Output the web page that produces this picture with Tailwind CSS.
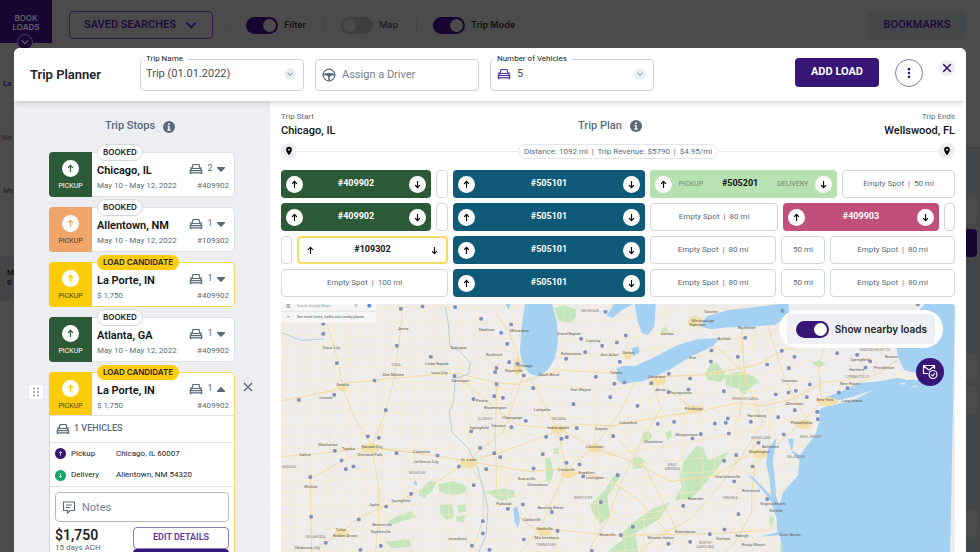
<!DOCTYPE html>
<html lang="en">
<head>
  <meta charset="UTF-8" />
  <meta name="viewport" content="width=device-width, initial-scale=1.0" />
  <title>Trip Planner</title>
  <script src="https://cdn.jsdelivr.net/npm/@tailwindcss/browser@4"></script>
</head>
<body class="relative flex h-screen flex-col overflow-hidden bg-[#4b4b4b] font-['Roboto','Liberation_Sans',sans-serif]">

  <!-- Icons -->
  <svg class="hidden" xmlns="http://www.w3.org/2000/svg">
    <symbol id="up" viewBox="0 0 16 16"><path d="M8 13V4M4.500 7 8 3.500 11.500 7" fill="none" stroke="currentColor" stroke-width="1.700"/></symbol>
    <symbol id="down" viewBox="0 0 16 16"><path d="M8 3v9M4.500 9 8 12.500 11.500 9" fill="none" stroke="currentColor" stroke-width="1.700"/></symbol>
    <symbol id="chevron" viewBox="0 0 12 12"><path d="M2 4l4 4 4-4" fill="none" stroke="currentColor" stroke-width="1.500"/></symbol>
    <symbol id="close" viewBox="0 0 12 12"><path d="M2 2l8 8M10 2l-8 8" fill="none" stroke="currentColor" stroke-width="1.300"/></symbol>
    <symbol id="car" viewBox="0 0 14 12"><path d="M1.300 9.800V7.200L3 5.500h8l1.700 1.700v2.600zM3 5.500l1-4h6l1 4M1.800 9.800v1.500M12.200 9.800v1.500M.8 5h2M11.200 5h2M1.500 7.700h11" fill="none" stroke="currentColor" stroke-width="1.200"/></symbol>
    <symbol id="caret" viewBox="0 0 8 5"><path d="M0 0h8v1L4.700 4.600a1 1 0 0 1-1.400 0L0 1z" fill="currentColor"/></symbol>
    <symbol id="info" viewBox="0 0 12 12"><circle cx="6" cy="6" r="6" fill="currentColor"/><path d="M6 5.200V9M4.700 5.500H6M4.500 9h3" stroke="#fff" stroke-width="1.400" fill="none"/><circle cx="6" cy="3.200" r=".9" fill="#fff"/></symbol>
    <symbol id="pin" viewBox="0 0 12 12"><path d="M6 1a3.400 3.400 0 0 0-3.400 3.400C2.600 7 6 11 6 11s3.400-4 3.400-6.600A3.400 3.400 0 0 0 6 1z" fill="currentColor"/><circle cx="6" cy="4.400" r="1.100" fill="#fff"/></symbol>
    <symbol id="wheel" viewBox="0 0 14 14"><circle cx="7" cy="7" r="5.900" fill="none" stroke="currentColor" stroke-width="1.200"/><path d="M1.500 6c3-1.300 8-1.300 11 0v1.500H9L7.800 9v3.500H6.200V9L5 7.500H1.500z" fill="currentColor"/></symbol>
  </svg>

  <!-- Page behind the dialog -->
  <header class="flex h-[49px] shrink-0 items-start text-[#1c0b40]">
    <button class="relative h-[43px] w-[52px] bg-[#170632] pt-[3px] font-['Inter'] text-[8px] leading-[9px] font-semibold text-[#65616d]">
      BOOK<br />LOADS
      <span class="absolute top-[34px] left-[17px] flex size-4 items-center justify-center rounded-full border border-[#4a3b6a] bg-[#170632]"><svg class="size-2.5"><use href="#chevron" /></svg></span>
    </button>
    <div class="flex grow items-center pt-[11px] pr-3.5 pl-[17px]">
      <button class="flex h-7 w-36 items-center justify-center gap-2 rounded border border-[#2c1d4e] text-[11px] font-semibold">
        SAVED SEARCHES
        <svg class="size-3.5"><use href="#chevron" /></svg>
      </button>
      <div class="ml-4 flex h-4 items-center border-l border-[#444] pl-4">
        <input type="checkbox" id="filter" checked class="h-[17px] w-8 appearance-none rounded-full bg-[#170632] p-0.5 before:block before:size-[13px] before:rounded-full before:bg-[#4b4b4b] checked:before:ml-auto" />
        <label for="filter" class="pl-1.5 font-['Inter'] text-[9px] font-semibold text-[#111]">Filter</label>
      </div>
      <div class="ml-[18px] flex h-4 items-center border-l border-[#444] pl-4">
        <input type="checkbox" id="map" class="h-[17px] w-8 appearance-none rounded-full bg-[#3c3e40] p-0.5 before:block before:size-[13px] before:rounded-full before:bg-[#4b4b4b] checked:before:ml-auto" />
        <label for="map" class="pl-1.5 font-['Inter'] text-[9px] font-medium text-[#1c1c1c]">Map</label>
      </div>
      <div class="ml-[18px] flex h-4 items-center border-l border-[#444] pl-4">
        <input type="checkbox" id="tripMode" checked class="h-[17px] w-8 appearance-none rounded-full bg-[#170632] p-0.5 before:block before:size-[13px] before:rounded-full before:bg-[#4b4b4b] checked:before:ml-auto" />
        <label for="tripMode" class="pl-1.5 font-['Inter'] text-[9px] font-semibold text-[#111]">Trip Mode</label>
      </div>
      <button class="ml-auto h-7 w-[98px] rounded bg-[#464749] text-[11px] font-semibold">BOOKMARKS</button>
    </div>
  </header>
  <div class="flex min-h-0 grow justify-between overflow-hidden text-[8px] text-[#25222c]">
    <div class="w-14 pt-[29px]">
      <p class="mb-[43px] pl-[3px] leading-[11px] font-bold text-[#1c0b40]">La</p>
      <p class="mb-[42px] pl-0.5 leading-[11px]">Ne</p>
      <p class="mb-[60px] pl-[3px] leading-[11px]">My</p>
      <p class="h-[45px] bg-[#424446] pt-3 pl-[7px] leading-[10px] font-bold text-[#111]">M<br />0</p>
    </div>
    <div class="mt-[98px] w-14 border-t border-[#3d3d3d] bg-[#444547] pt-12 pr-[3px]">
      <div class="h-7 rounded bg-[#4b4b4b]"></div>
      <div class="mt-[5px] h-7 rounded bg-[#170632]"></div>
      <div class="mt-24 h-7 rounded bg-[#4b4b4b]"></div>
      <div class="mt-[5px] h-7 rounded bg-[#4b4b4b]"></div>
      <div class="mt-[95px] h-7 rounded bg-[#4b4b4b]"></div>
    </div>
  </div>

  <!-- Trip planner dialog -->
  <div role="dialog" class="absolute inset-x-3.5 top-12 bottom-0 flex flex-col overflow-hidden rounded-t-md bg-white">
    <div class="relative flex h-[53px] shrink-0 items-center bg-white pr-[11px] pl-4 shadow-md">
      <h1 class="w-[110px] text-[13px] font-semibold text-[#24222a]">Trip Planner</h1>
      <div class="flex gap-[11px]">
        <div class="relative">
          <label for="tripName" class="absolute -top-1.5 left-0.5 bg-white px-1 text-[8px] leading-3 text-[#222]">Trip Name</label>
          <select id="tripName" class="h-8 w-[164px] appearance-none rounded border border-[#cfd2d8] px-[5px] text-[11px] text-[#4a4d55]"><option>Trip (01.01.2022)</option></select>
          <svg class="absolute top-[9px] right-2 size-3 rounded-full bg-[#eceef2] p-0.5 text-[#6d7d90]"><use href="#chevron" /></svg>
        </div>
        <div class="relative">
          <svg class="absolute top-[9px] left-[7px] size-3.5 text-[#5b6a7a]"><use href="#wheel" /></svg>
          <input type="text" aria-label="Driver" placeholder="Assign a Driver" class="h-8 w-[164px] rounded border border-[#cfd2d8] pl-[26px] text-[11px] placeholder:text-[#748090]" />
        </div>
        <div class="relative">
          <label for="vehicles" class="absolute -top-1.5 left-[3px] bg-white px-1 text-[8px] leading-3 text-[#222]">Number of Vehicles</label>
          <svg class="absolute top-[9px] left-[7px] h-3 w-3.5 text-[#5a35a5]"><use href="#car" /></svg>
          <select id="vehicles" class="h-8 w-[164px] appearance-none rounded border border-[#cfd2d8] pl-[26px] text-[11px] text-[#4a4d55]"><option>5</option></select>
          <svg class="absolute top-[9px] right-2 size-3 rounded-full bg-[#eceef2] p-0.5 text-[#6d7d90]"><use href="#chevron" /></svg>
        </div>
      </div>
      <button class="mr-4 mb-1 ml-auto h-[29px] w-[84px] rounded bg-[#371678] text-[11px] font-bold text-white">ADD LOAD</button>
      <button aria-label="More" class="mr-4 mb-1 flex size-7 items-center justify-center rounded-full border border-[#8a7bb0] text-[#371678]">
        <svg class="size-3" viewBox="0 0 14 14" fill="currentColor"><circle cx="7" cy="2.500" r="1.500" /><circle cx="7" cy="7" r="1.500" /><circle cx="7" cy="11.500" r="1.500" /></svg>
      </button>
      <button aria-label="Close" class="mb-3.5 flex size-4 items-center justify-center rounded-full bg-[#eceef2] text-[#371678]"><svg class="size-2.5" viewBox="0 0 12 12"><path d="M1.500 1.500l9 9M10.500 1.500l-9 9" stroke="currentColor" stroke-width="2" /></svg></button>
    </div>

    <div class="flex min-h-0 grow">
      <!-- Trip stops -->
      <aside class="w-64 shrink-0 overflow-hidden bg-[#eceef2] pr-[35px] pl-[35px] text-[#5b6a7a]">
        <h2 class="flex h-[51px] items-center justify-center gap-2 pr-1 text-[11px] font-medium">Trip Stops <svg class="size-3"><use href="#info" /></svg></h2>
        <ul class="space-y-2.5 text-[9px]">
          <li class="relative flex h-[45px] rounded border border-[#dfe1e6] bg-white">
            <div class="-my-px -ml-px flex w-[43px] flex-col items-center rounded-l bg-[#2d5a36] pt-2 text-[7px] text-white">
              <svg class="mb-1 size-[17px] rounded-full bg-white p-[3px] text-[#2d5a36]"><use href="#up" /></svg>PICKUP
            </div>
            <span class="absolute -top-[9px] left-[47px] h-[17px] rounded-full border border-[#d5d7dc] bg-white px-[5px] font-['Inter'] text-[8px] leading-[15px] font-semibold text-[#24222a]">BOOKED</span>
            <div class="grow pt-[9px] pr-[5px] pl-[5px]">
              <div class="flex items-center">
                <b class="grow text-[11px] leading-[15px] font-semibold text-[#111]">Chicago, IL</b>
                <svg class="mb-1 h-3 w-3.5"><use href="#car" /></svg><span class="mb-1 w-[14px] text-center">2</span><svg class="mr-1 mb-[3px] h-[5px] w-2"><use href="#caret" /></svg>
              </div>
              <div class="flex justify-between text-[8px] leading-3"><span>May 10 - May 12, 2022</span><span>#409902</span></div>
            </div>
          </li>
          <li class="relative flex h-[45px] rounded border border-[#dfe1e6] bg-white">
            <div class="-my-px -ml-px flex w-[43px] flex-col items-center rounded-l bg-[#f0a56b] pt-2 text-[7px] text-[#4a3626]">
              <svg class="mb-1 size-[17px] rounded-full bg-white p-[3px] text-[#f0a56b]"><use href="#up" /></svg>PICKUP
            </div>
            <span class="absolute -top-[9px] left-[47px] h-[17px] rounded-full border border-[#d5d7dc] bg-white px-[5px] font-['Inter'] text-[8px] leading-[15px] font-semibold text-[#24222a]">BOOKED</span>
            <div class="grow pt-[9px] pr-[5px] pl-[5px]">
              <div class="flex items-center">
                <b class="grow text-[11px] leading-[15px] font-semibold text-[#111]">Allentown, NM</b>
                <svg class="mb-1 h-3 w-3.5"><use href="#car" /></svg><span class="mb-1 w-[14px] text-center">1</span><svg class="mr-1 mb-[3px] h-[5px] w-2"><use href="#caret" /></svg>
              </div>
              <div class="flex justify-between text-[8px] leading-3"><span>May 10 - May 12, 2022</span><span>#109302</span></div>
            </div>
          </li>
          <li class="relative flex h-[45px] rounded border border-[#f7da62] bg-white">
            <div class="-my-px -ml-px flex w-[43px] flex-col items-center rounded-l bg-[#fccb0a] pt-2 text-[7px] text-[#4d400a]">
              <svg class="mb-1 size-[17px] rounded-full bg-white p-[3px] text-[#fccb0a]"><use href="#up" /></svg>PICKUP
            </div>
            <span class="absolute -top-2 left-[47px] h-[15px] rounded-full bg-[#fccb0a] px-1.5 font-['Inter'] text-[8px] leading-[15px] font-semibold text-[#24222a]">LOAD CANDIDATE</span>
            <div class="grow pt-[9px] pr-[5px] pl-[5px]">
              <div class="flex items-center">
                <b class="grow text-[11px] leading-[15px] font-semibold text-[#111]">La Porte, IN</b>
                <svg class="mb-1 h-3 w-3.5"><use href="#car" /></svg><span class="mb-1 w-[14px] text-center">1</span><svg class="mr-1 mb-[3px] h-[5px] w-2"><use href="#caret" /></svg>
              </div>
              <div class="flex justify-between text-[8px] leading-3"><span>$ 1,750</span><span>#409902</span></div>
            </div>
          </li>
          <li class="relative flex h-[45px] rounded border border-[#dfe1e6] bg-white">
            <div class="-my-px -ml-px flex w-[43px] flex-col items-center rounded-l bg-[#2d5a36] pt-2 text-[7px] text-white">
              <svg class="mb-1 size-[17px] rounded-full bg-white p-[3px] text-[#2d5a36]"><use href="#up" /></svg>PICKUP
            </div>
            <span class="absolute -top-[9px] left-[47px] h-[17px] rounded-full border border-[#d5d7dc] bg-white px-[5px] font-['Inter'] text-[8px] leading-[15px] font-semibold text-[#24222a]">BOOKED</span>
            <div class="grow pt-[9px] pr-[5px] pl-[5px]">
              <div class="flex items-center">
                <b class="grow text-[11px] leading-[15px] font-semibold text-[#111]">Atlanta, GA</b>
                <svg class="mb-1 h-3 w-3.5"><use href="#car" /></svg><span class="mb-1 w-[14px] text-center">1</span><svg class="mr-1 mb-[3px] h-[5px] w-2"><use href="#caret" /></svg>
              </div>
              <div class="flex justify-between text-[8px] leading-3"><span>May 10 - May 12, 2022</span><span>#409902</span></div>
            </div>
          </li>

          <!-- Expanded stop -->
          <li class="relative rounded border border-[#f7da62] bg-white">
            <svg class="absolute top-3 -left-[21px] size-3.5 bg-white p-0.5" viewBox="0 0 10 10" fill="#8a94a3"><circle cx="3" cy="1.500" r="1" /><circle cx="7" cy="1.500" r="1" /><circle cx="3" cy="5" r="1" /><circle cx="7" cy="5" r="1" /><circle cx="3" cy="8.500" r="1" /><circle cx="7" cy="8.500" r="1" /></svg>
            <button aria-label="Remove stop" class="absolute top-2 -right-5"><svg class="size-3"><use href="#close" /></svg></button>
            <span class="absolute -top-2 left-[47px] h-[15px] rounded-full bg-[#fccb0a] px-1.5 font-['Inter'] text-[8px] leading-[15px] font-semibold text-[#24222a]">LOAD CANDIDATE</span>
            <div class="flex h-[43px] border-b border-[#dfe1e6]">
              <div class="-mt-px -ml-px flex w-[43px] flex-col items-center rounded-tl bg-[#fccb0a] pt-2 text-[7px] text-[#4d400a]">
                <svg class="mb-1 size-[17px] rounded-full bg-white p-[3px] text-[#fccb0a]"><use href="#up" /></svg>PICKUP
              </div>
              <div class="grow pt-[9px] pr-[5px] pl-[5px]">
                <div class="flex items-center">
                  <b class="grow text-[11px] leading-[15px] font-semibold text-[#111]">La Porte, IN</b>
                  <svg class="mb-1 h-3 w-3.5"><use href="#car" /></svg><span class="mb-1 w-[14px] text-center">1</span><svg class="mr-1 mb-[3px] h-[5px] w-2 rotate-180"><use href="#caret" /></svg>
                </div>
                <div class="flex justify-between text-[8px] leading-3"><span>$ 1,750</span><span>#409902</span></div>
              </div>
            </div>
            <div class="flex h-[27px] items-center gap-1 border-b border-[#dfe1e6] px-1.5 font-medium"><svg class="h-3 w-3.5"><use href="#car" /></svg>1 VEHICLES</div>
            <dl class="grid h-11 grid-cols-[11px_40px_1fr] items-center gap-x-[5px] border-b border-[#dfe1e6] px-[5px] text-[8px] text-[#24222a]">
              <svg class="size-[11px] rounded-full bg-[#371678] p-0.5 text-white"><use href="#up" /></svg><dt>Pickup</dt><dd>Chicago, IL 60007</dd>
              <svg class="size-[11px] rounded-full bg-[#13a866] p-0.5 text-white"><use href="#down" /></svg><dt>Delivery</dt><dd>Allentown, NM 54320</dd>
            </dl>
            <div class="relative px-[5px] pt-[5px]">
              <svg class="absolute top-[13px] left-3 size-3.5" viewBox="0 0 14 14" fill="none" stroke="currentColor" stroke-width="1.100"><path d="M1.500 2h11v8.500H8L5.500 13v-2.500h-4zM4 5h6M4 7.500h4" /></svg>
              <input type="text" aria-label="Notes" placeholder="Notes" class="h-[30px] w-full rounded border border-[#b4bac4] pl-[26px] text-[11px] placeholder:text-[#748090]" />
            </div>
            <div class="flex justify-between px-[5px] pt-[5px]">
              <div><b class="block text-[14px] leading-4 font-semibold text-[#24222a]">$1,750</b><span class="block text-[8px] leading-[9px]">15 days ACH</span></div>
              <div class="w-24 text-[9px] font-semibold">
                <button class="block h-[22px] w-full rounded-sm border border-[#8a7bb0] text-[#5a35a5]">EDIT DETAILS</button>
                <button aria-label="Book load" class="block h-[22px] w-full rounded-sm bg-[#371678]"></button>
              </div>
            </div>
          </li>
        </ul>
      </aside>

      <!-- Trip plan -->
      <main class="flex min-w-0 grow flex-col px-[11px] pt-2.5 text-[8px] text-[#5b6a7a]">
        <div class="flex items-center justify-between">
          <div><p class="leading-3">Trip Start</p><b class="block text-[11px] leading-4 font-medium text-[#111]">Chicago, IL</b></div>
          <h2 class="flex items-center gap-2 pt-0.5 text-[11px] font-medium">Trip Plan <svg class="size-3"><use href="#info" /></svg></h2>
          <div class="text-right"><p class="leading-3">Trip Ends</p><b class="block text-[11px] leading-4 font-medium text-[#111]">Wellswood, FL</b></div>
        </div>
        <div class="mt-1 flex items-center">
          <svg class="size-4 rounded-full bg-[#eceef2] p-[3px] text-black"><use href="#pin" /></svg>
          <hr class="grow border-[#e8eaee]" />
          <span class="rounded-full border border-[#e3e5ea] px-[5px] leading-[13px]">Distance: 1092 mi&nbsp; |&nbsp; Trip Revenue: $5790&nbsp; |&nbsp; $4.95/mi</span>
          <hr class="grow border-[#e8eaee]" />
          <svg class="size-4 rounded-full bg-[#eceef2] p-[3px] text-black"><use href="#pin" /></svg>
        </div>

        <div class="mt-[11px] space-y-[5px] text-center">
          <div class="grid h-7 grid-cols-[150fr_12fr_192fr_187fr_113fr] gap-[5px]">
            <div class="flex items-center justify-between rounded bg-[#2d5a36] px-[5px] text-[9px] font-bold text-white"><svg class="size-[17px] rounded-full bg-white p-[3px] text-black"><use href="#up" /></svg>#409902<svg class="size-[17px] rounded-full bg-white p-[3px] text-black"><use href="#down" /></svg></div>
            <div class="rounded border border-[#d3d6dc]"></div>
            <div class="flex items-center justify-between rounded bg-[#0f5a78] px-[5px] text-[9px] font-bold text-white"><svg class="size-[17px] rounded-full bg-white p-[3px] text-black"><use href="#up" /></svg>#505101<svg class="size-[17px] rounded-full bg-white p-[3px] text-black"><use href="#down" /></svg></div>
            <div class="flex items-center justify-between rounded bg-[#b7e1b0] px-[5px] text-[7px] text-[#6c8a6c]"><svg class="size-[17px] rounded-full bg-white p-[3px] text-black"><use href="#up" /></svg>PICKUP<b class="px-3 text-[9px] font-bold text-[#111]">#505201</b>DELIVERY<svg class="size-[17px] rounded-full bg-white p-[3px] text-black"><use href="#down" /></svg></div>
            <div class="rounded border border-[#d3d6dc] leading-[26px]">Empty Spot&nbsp; |&nbsp; 50 mi</div>
          </div>
          <div class="grid h-7 grid-cols-[150fr_12fr_192fr_128fr_156fr_11fr] gap-[5px]">
            <div class="flex items-center justify-between rounded bg-[#2d5a36] px-[5px] text-[9px] font-bold text-white"><svg class="size-[17px] rounded-full bg-white p-[3px] text-black"><use href="#up" /></svg>#409902<svg class="size-[17px] rounded-full bg-white p-[3px] text-black"><use href="#down" /></svg></div>
            <div class="rounded border border-[#d3d6dc]"></div>
            <div class="flex items-center justify-between rounded bg-[#0f5a78] px-[5px] text-[9px] font-bold text-white"><svg class="size-[17px] rounded-full bg-white p-[3px] text-black"><use href="#up" /></svg>#505101<svg class="size-[17px] rounded-full bg-white p-[3px] text-black"><use href="#down" /></svg></div>
            <div class="rounded border border-[#d3d6dc] leading-[26px]">Empty Spot&nbsp; |&nbsp; 80 mi</div>
            <div class="flex items-center justify-between rounded bg-[#c05079] px-[5px] text-[9px] font-bold text-white"><svg class="size-[17px] rounded-full bg-white p-[3px] text-black"><use href="#up" /></svg>#409903<svg class="size-[17px] rounded-full bg-white p-[3px] text-black"><use href="#down" /></svg></div>
            <div class="rounded border border-[#d3d6dc]"></div>
          </div>
          <div class="grid h-7 grid-cols-[11fr_151fr_192fr_126fr_44fr_125fr] gap-[5px]">
            <div class="rounded border border-[#d3d6dc]"></div>
            <div class="flex items-center justify-between rounded border-2 border-[#f9dd62] px-[3px] text-[9px] font-bold text-[#111]"><svg class="size-[17px] p-[3px]"><use href="#up" /></svg>#109302<svg class="size-[17px] p-[3px]"><use href="#down" /></svg></div>
            <div class="flex items-center justify-between rounded bg-[#0f5a78] px-[5px] text-[9px] font-bold text-white"><svg class="size-[17px] rounded-full bg-white p-[3px] text-black"><use href="#up" /></svg>#505101<svg class="size-[17px] rounded-full bg-white p-[3px] text-black"><use href="#down" /></svg></div>
            <div class="rounded border border-[#d3d6dc] leading-[26px]">Empty Spot&nbsp; |&nbsp; 80 mi</div>
            <div class="rounded border border-[#d3d6dc] leading-[26px]">50 mi</div>
            <div class="rounded border border-[#d3d6dc] leading-[26px]">Empty Spot&nbsp; |&nbsp; 80 mi</div>
          </div>
          <div class="grid h-7 grid-cols-[167fr_192fr_126fr_44fr_125fr] gap-[5px]">
            <div class="rounded border border-[#d3d6dc] leading-[26px]">Empty Spot&nbsp; |&nbsp; 100 mi</div>
            <div class="flex items-center justify-between rounded bg-[#0f5a78] px-[5px] text-[9px] font-bold text-white"><svg class="size-[17px] rounded-full bg-white p-[3px] text-black"><use href="#up" /></svg>#505101<svg class="size-[17px] rounded-full bg-white p-[3px] text-black"><use href="#down" /></svg></div>
            <div class="rounded border border-[#d3d6dc] leading-[26px]">Empty Spot&nbsp; |&nbsp; 80 mi</div>
            <div class="rounded border border-[#d3d6dc] leading-[26px]">50 mi</div>
            <div class="rounded border border-[#d3d6dc] leading-[26px]">Empty Spot&nbsp; |&nbsp; 80 mi</div>
          </div>
        </div>

        <!-- Map -->
        <div class="relative mt-[7px] min-h-0 grow overflow-hidden rounded-t">
          <svg id="usMap" class="h-full w-full" viewBox="33 27 2022 744" preserveAspectRatio="xMidYMin slice" font-family="Roboto, sans-serif">
            <rect x="33" y="27" width="2022" height="760" fill="#eeedeb" />
            <!-- Parks -->
            <g fill="#c3e6bc">
              <path d="M852 40l30-10 35 12 2 25-22 18-30-6zM450 585l30-28 20 4-14 28-24 20-16-8zM505 568l45-10 40 16-4 18-36 10-42-12zM510 630l35-4 8 38-22 12-20-18zM560 632l25-5 3 22-20 6zM557 665l30-6-6 22-20-2zM645 590l55-10 32 8 4 16-40 14-24-12zM355 680l20-15 50-18 14 20-40 10-30 12zM345 740l70-8 10 22-60 6zM825 490l16-4 10 50-14 32-8-10zM850 462l15-6 2 20-14 2zM960 630l40-40 40-60 12 14-40 60 8 60-30 22-20-30zM1015 768l30-24 50-30 10 57h-80zM1240 500l40-48 18 4 16 40 62-26-32 50-50 60-30 32-50 4 20-40-6-30zM1305 235l20-34 18 4 28 40-20 16-38-6zM1365 240l40-10 48 14 14 18-22 14-24 24-20-20-34-8zM1625 205l20-10 22 10-20 14zM1087 492l20-8 18 14-12 22-24 2zM1118 415l20-8 8 20-14 14-20-6zM1186 415l16-10 4 18-14 16zM1150 640l50-18-30 50-64 36-40 30-20-14 40-40zM1175 100l12-6 6 16-18 10zM1500 660l12 8-4 24-10-8zM1530 745l28-18-14 44h-14z" />
            </g>
            <!-- Minor roads -->
            <g id="minorRoads" fill="none" stroke="#f6e9c2" stroke-width="2"></g>
            <!-- Interstates -->
            <g fill="none" stroke="#f3dba0" stroke-width="3">
              <path d="M33 318l160-32 22-20 150-16 190-16 130 30 60 4 40-18 90-24 180 10 80 12 60-4 96-4 70-10 100-20 80-46 150-30 140-6 60-10" />
              <path d="M125 771l-4-220 90-50 96-44 150 20 130 20 90-20 110-40 130-50 110 6 60-12 110-20 70-8 140-30 70 10 90-20 90-50 90-10 40-20" />
              <path d="M154 27l50 170 14 80 30 80 58 96 40-100 28-110 20-160 4-50M306 457l20 120 0 100-10 94M590 500l-90 60-110 56-120 50-60 50-90 54M590 500l50 70 0 100-30 90M590 500l110-90 60-170M755 240l-10-60-30-70-40-60M780 250l80 150 30 120-80 180-60 70M600 500l180 30 110-10 80-60 80-110 50-100M866 400l110 60 110 40 120 60 130-20 100-60 40-60M890 530l120 20 90 60 100 110M825 700l180 20 130 0 190-4 170-10M1143 250l30 90-60 100-50 100-50 130-60 101M1270 340l-80-60-50-40M1300 133l60 40 60 60 60 150-60 90-70 100-90 100-110 60-60 60M1595 382l-90 80-50 50-10 80 0 60-50 90-40 40M1595 382l60-62 70-36 100-50 60-40M1415 100l10 160-20 120M1600 360l-60-120-50-160M1655 315l-10-100 20-60M680 270l-4 150 4 160 60 80 80 60M560 240l90 80 90 70 120 10M33 485l120-10 150-18M306 457l160 20M1225 716l-100-200-80-80" />
            </g>
            <!-- Water -->
            <g fill="#a4d0f2">
              <path d="M765 27L754 100l-4 70 8 38 22 30 28 6 28-22 20-34 8-50-4-60-14-51zM706 27h16l-6 18zM1010 62l22-35h58l-40 22-22 20zM1095 27h62l-4 68-20 26-18-8-14-40zM1040 220l22-8 32 2 60-28 64-34 66-20 66-2-20 22-66 32-68 42-76 32-66 8-14-14zM1085 160l20-6 4 18-20 14zM1290 94l20-30 70-20 60-6 90-11h26v34l-40 28-70 6-70 2-54 6z" />
              <path d="M2055 27h-90l-60 60-27 60 6 38 18 40 50 14v-20l14 20-24 16-60-6-54 10-60 6-58 26-56 20 4 14 92-20 62-22-60 32-92 22-14 10 4 24-14 48-46 62-26-16-10-34 18 0-6 40 22 26-4 44-44 50-12 38-10-26-4-58-6-46 12-72-26 36-6 40 10 44 6 56-54-56-16-8 40 42 30 40 16 50 2 40-50 14 56-4 10 38-8 41h510z" />
              <path d="M730 640l12-6 8 40-6 26-10-20zM430 565l8-10 4 18z" />
            </g>
            <!-- Cape Cod and islands -->
            <path d="M1878 225l30 18 38-4-2-24 8 4-2 30-42 6-34-14zM1884 266l20-3 2 6zM1924 275l16-4 2 5z" fill="#f5efd8" />
            <!-- Rivers -->
            <path d="M526 35l10 60 4 60 30 14 30 34-4 34-40 14-6 70-12 30 8 60 50 50 24 50 20 70 14 60-6 80-30 70M33 112l60 24 70-4" fill="none" stroke="#b4cfdf" stroke-width="3" />
            <g fill="#f3dfa8">
              <ellipse cx="218" cy="280" rx="14" ry="9" /><ellipse cx="303" cy="460" rx="26" ry="15" /><ellipse cx="596" cy="505" rx="26" ry="14" /><ellipse cx="742" cy="215" rx="12" ry="26" /><ellipse cx="865" cy="402" rx="22" ry="13" /><ellipse cx="975" cy="460" rx="22" ry="13" /><ellipse cx="895" cy="538" rx="22" ry="12" /><ellipse cx="216" cy="714" rx="22" ry="12" /><ellipse cx="825" cy="710" rx="20" ry="14" /><ellipse cx="1165" cy="258" rx="22" ry="14" /><ellipse cx="1272" cy="342" rx="20" ry="12" /><ellipse cx="1600" cy="388" rx="26" ry="14" /><ellipse cx="1470" cy="476" rx="22" ry="14" /><ellipse cx="1672" cy="320" rx="32" ry="13" /><ellipse cx="1275" cy="80" rx="22" ry="16" /><ellipse cx="1074" cy="180" rx="12" ry="14" />
            </g>
            <g id="shields" fill="#8290bd"></g>
            <!-- City and state names -->
            <g id="cities" font-size="12" text-anchor="middle" fill="#5c5850"></g>
            <g font-size="11" text-anchor="middle" fill="#8a8780">
              <text x="378" y="214">IOWA</text><text x="645" y="374">ILLINOIS</text><text x="866" y="374">INDIANA</text><text x="442" y="536">MISSOURI</text><text x="940" y="612">KENTUCKY</text><text x="828" y="752">TENNESSEE</text><text x="136" y="730">OKLAHOMA</text><text x="58" y="519">KANSAS</text><text x="960" y="51">MICHIGAN</text><text x="1425" y="316">PENNSYLVANIA</text><text x="1473" y="433">MARYLAND</text><text x="1578" y="490">DELAWARE</text><text x="1622" y="430">NEW JERSEY</text><text x="1207" y="514">WEST</text><text x="1207" y="526">VIRGINIA</text><text x="1380" y="611">VIRGINIA</text><text x="1305" y="746">NORTH</text><text x="1305" y="758">CAROLINA</text><text x="1762" y="248">CONNECTICUT</text><text x="1815" y="167">MASSACHUSETTS</text>
            </g>
            <!-- Search panel -->
            <path d="M33 27h286v56H33z" fill="#f6f6f6" />
            <path d="M33 49h286" stroke="#ddd" stroke-width="2" />
            <path d="M49 29h11M49 33h11M49 37h11M51 65h8" stroke="#777" stroke-width="2" />
            <circle cx="298" cy="32" r="6" fill="#5b8fd8" /><circle cx="258" cy="31" r="4" fill="none" stroke="#999" stroke-width="2" />
            <text x="80" y="36" font-size="11" fill="#999">Search Google Maps</text>
            <text x="80" y="69" font-size="11" fill="#555">See travel times, traffic and nearby places</text>
          </svg>

          <div class="absolute top-1.5 right-3 rounded-full bg-white px-2 py-1">
            <div class="flex h-[30px] items-center rounded bg-[#eff0f3] pr-2 pl-[9px]">
              <input type="checkbox" id="nearby" checked class="h-[17px] w-[33px] appearance-none rounded-full bg-[#371678] p-0.5 before:block before:size-[13px] before:rounded-full before:bg-white checked:before:ml-auto" />
              <label for="nearby" class="pl-1.5 font-['Inter'] text-[10px] font-semibold text-[#24222a]">Show nearby loads</label>
            </div>
          </div>
          <button aria-label="Offers" class="absolute top-[54px] right-[11px] flex size-7 items-center justify-center rounded-full bg-[#371678] text-white">
            <svg class="size-4" viewBox="0 0 16 16" fill="none" stroke="currentColor" stroke-width="1.200"><path d="M6 9.500H1.500v-8h11V5M1.500 2L7 6l5.500-4" /><circle cx="11" cy="10.500" r="4" /><path d="M9.300 10.700l1.300 1.200 2.200-2.500" /></svg>
          </button>
        </div>
      </main>
    </div>
  </div>

  <script>
    const svgNS = "http://www.w3.org/2000/svg";

    // Highway shields: x, y
    const shields = [
      [392,41],[457,34],[555,36],[633,71],[159,86],[159,116],[380,152],[200,204],[313,256],[192,299],[86,314],[347,345],[482,185],[553,243],[723,88],[693,113],[711,146],[717,201],[742,206],[679,219],[675,231],[679,267],[761,241],[789,279],[672,303],[698,308],[610,312],[767,377],[724,396],[603,409],[630,458],[672,474],[690,486],[648,522],[566,514],[502,481],[379,474],[293,424],[326,428],[194,467],[214,496],[250,514],[227,522],[120,546],[423,596],[348,634],[123,665],[266,673],[167,743],[332,752],[271,764],[611,570],[638,678],[638,715],[605,752],[658,764],[713,641],[758,628],[761,733],[845,651],[862,707],[992,621],[1043,540],[1052,720],[965,767],[939,544],[928,508],[889,503],[818,477],[790,520],[828,425],[874,431],[890,426],[920,399],[910,327],[1029,423],[1020,306],[1033,266],[1063,262],[977,245],[888,191],[945,171],[933,131],[996,152],[1040,142],[1067,121],[1049,200],[1006,50],
      [1196,236],[1260,250],[1143,264],[1195,291],[1255,283],[1102,332],[1163,386],[1212,380],[1324,166],[1322,199],[1403,185],[1361,288],[1425,128],[1537,47],[1535,167],[1573,185],[1556,219],[1491,208],[1619,268],[1555,292],[1577,287],[1610,306],[1517,298],[1574,345],[1641,350],[1643,372],[1524,366],[1442,380],[1373,370],[1367,383],[1334,385],[1292,417],[1267,430],[1376,415],[1541,418],[1465,443],[1398,480],[1362,497],[1447,514],[1392,559],[1491,612],[1239,632],[1405,657],[1088,695],[1363,703],[1319,717],[1260,740],[1195,746],[1706,292],[1732,279],[1701,174],[1761,179],[1800,199],[1786,217],[1943,28]
    ];
    for (const [x, y] of shields) {
      const s = document.createElementNS(svgNS, "rect");
      s.setAttribute("x", x - 5);
      s.setAttribute("y", y - 5);
      s.setAttribute("width", 11);
      s.setAttribute("height", 11);
      s.setAttribute("rx", 4);
      document.getElementById("shields").appendChild(s);
    }

    // City labels: name, x, y
    const cities = [
      ["Milwaukee",748,112],["Madison",650,109],["Chicago",766,217],["Naperville",732,231],["Rockford",672,183],["Dubuque",565,163],["Cedar Rapids",500,209],["Des Moines",370,243],["Omaha",218,273],["Lincoln",168,312],["Sioux City",184,163],["Ames",400,104],["Davenport",572,262],["Iowa City",508,237],["Peoria",636,321],["Bloomington",676,341],["Champaign",727,373],["Springfield",628,402],["Decatur",685,397],["Indianapolis",865,402],["Lafayette",817,347],["Fort Wayne",932,288],["South Bend",836,242],["Grand Rapids",896,120],["Lansing",970,141],["Kalamazoo",903,181],["Ann Arbor",1018,182],["Detroit",1076,176],["Toledo",1038,238],["Dayton",994,404],["Columbus",1074,386],["Cincinnati",974,459],["Louisville",890,529],["Lexington",974,552],["Frankfort",950,538],["Evansville",770,556],["Owensboro",802,573],["St. Louis",596,499],["Columbia",454,473],["Jefferson City",468,504],["Kansas City",306,459],["Overland Park",300,484],["Topeka",235,465],["Manhattan",174,453],["Salina",105,483],["Wichita",122,580],["Springfield",392,620],["Joplin",312,632],["Tulsa",212,708],["Broken Arrow",225,727],["Oklahoma City",112,762],["Fayetteville",332,713],["Bentonville",336,694],["Nashville",824,705],["Clarksville",785,677],["Bowling Green",842,641],["Murfreesboro",830,733],["Knoxville",1012,723],["Jonesboro",562,734],["Paducah",702,629],
      ["Toronto",1322,54],["Mississauga",1298,80],["Hamilton",1283,94],["Buffalo",1363,134],["Rochester",1430,103],["London",1192,120],["Cleveland",1160,250],["Akron",1172,289],["Youngstown",1232,298],["Pittsburgh",1272,344],["Erie",1268,192],["Harrisburg",1460,366],["Allentown",1573,331],["Philadelphia",1594,386],["New York",1665,319],["Long Island",1745,322],["Scranton",1558,260],["Baltimore",1502,459],["Washington",1468,475],["Richmond",1443,592],["Virginia Beach",1508,630],["Norfolk",1518,650],["Charleston",1150,444],["Roanoke",1277,614],["Charlottesville",1372,550],["Greensboro",1245,714],["Durham",1360,735],["Raleigh",1416,725],["Winston-Salem",1172,732],["Hartford",1760,229],["New Haven",1740,269],["Boston",1864,189],["Providence",1842,223],["Springfield",1770,197],["Morgantown",1250,422],["Rocky Mount",1450,752],["Outer Banks",1560,723]
    ];
    for (const [name, x, y] of cities) {
      const t = document.createElementNS(svgNS, "text");
      t.setAttribute("x", x);
      t.setAttribute("y", y);
      t.textContent = name;
      document.getElementById("cities").appendChild(t);
    }

    // Minor road grid, the water is drawn over it
    let roads = "";
    for (let i = 0; i < 40; i++) {
      const x = 44 + i * 38;
      roads += `M${x} 27l${(i * 7) % 13 - 6} 200 ${(i * 11) % 39 - 19} 180 ${(i * 17) % 41 - 20} 370`;
    }
    for (let i = 0; i < 22; i++) {
      const y = 50 + i * 34;
      roads += `M33 ${y}l240 ${(i * 7) % 15 - 7} 220 ${(i * 5) % 17 - 8} 230 3 300 ${(i * 13) % 41 - 20} 200 -30 260 -${(i * 9) % 60} 140 -40`;
    }
    const grid = document.createElementNS(svgNS, "path");
    grid.setAttribute("d", roads);
    document.getElementById("minorRoads").appendChild(grid);
  </script>

</body>
</html>
